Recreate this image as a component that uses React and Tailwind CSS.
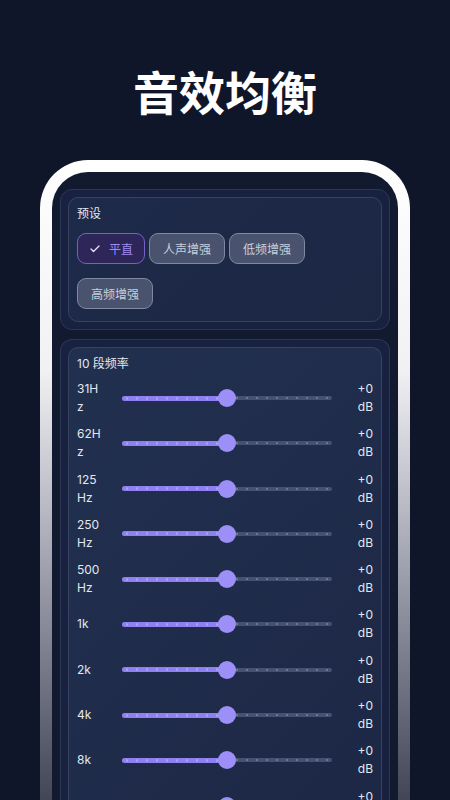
import { Check } from 'lucide-react';

const presets = [
  { name: '平直', active: true },
  { name: '人声增强' },
  { name: '低频增强' },
  { name: '高频增强' },
];

const bands = ['31Hz', '62Hz', '125 Hz', '250 Hz', '500 Hz', '1k', '2k', '4k', '8k', '16k'];

function Slider({ value = 50 }) {
  return (
    <div className="relative flex-1 h-[18px] flex items-center">
      <div className="w-full h-[4px] rounded-full bg-[#465070] bg-[radial-gradient(circle,rgba(150,160,190,0.45)_1px,transparent_1.3px)] bg-size-[10px_4px]" />
      <div
        className="absolute left-0 h-[5px] rounded-full bg-[#8f80f2] bg-[radial-gradient(circle,rgba(200,195,255,0.5)_1px,transparent_1.3px)] bg-size-[10px_5px]"
        style={{ width: value + '%' }}
      />
      <div
        className="absolute w-[18px] h-[18px] -ml-[9px] rounded-full bg-[#9d8ff8]"
        style={{ left: value + '%' }}
      />
    </div>
  );
}

export default function App() {
  return (
    <div className="w-[450px] h-[800px] overflow-hidden bg-[#0f1629] font-['Inter','Noto_Sans_CJK_SC',sans-serif]">
      <h1 className="pt-[67px] text-center text-white text-[46px] leading-[46px] font-bold font-['Noto_Sans_CJK_SC',sans-serif]">
        音效均衡
      </h1>

      <div className="mx-[40px] mt-[47px] h-[700px] rounded-t-[48px] p-[12px] pb-0 bg-[linear-gradient(180deg,#ffffff_0%,#f1f1f4_30%,#9a9caa_60%,#2a2e40_100%)]">
        <div className="h-full rounded-t-[36px] bg-[#111a2f] px-[8px] pt-[17px] flex flex-col gap-[9px]">
          {/* Presets */}
          <div className="rounded-[12px] border border-[#2c3756] bg-[#182240] p-[7px]">
            <div className="rounded-[10px] border border-[#37425f] bg-[linear-gradient(135deg,#22305094_0%,#1c2744_100%)] px-[8px] pt-[7px] pb-[12px]">
              <div className="text-[12px] leading-[16px] text-[#e2e8f0] font-['Noto_Sans_CJK_SC',sans-serif]">预设</div>
              <div className="mt-[12px] flex flex-wrap gap-x-[4px] gap-y-[14px]">
                {presets.map((p) => (
                  <div
                    key={p.name}
                    className={
                      p.active
                        ? 'h-[31px] px-[11px] flex items-center gap-[8px] rounded-[9px] border border-[#7262c8] bg-[#2e2658] text-[12px] text-[#9d8cf5] font-["Noto_Sans_CJK_SC",sans-serif]'
                        : 'h-[31px] px-[13px] flex items-center rounded-[9px] border border-[#7f88a0] bg-[#4a536e] text-[12px] text-[#c8cfdc] font-["Noto_Sans_CJK_SC",sans-serif]'
                    }
                  >
                    {p.active && <Check size={12} strokeWidth={2.5} className="text-[#e8e4ff]" />}
                    {p.name}
                  </div>
                ))}
              </div>
            </div>
          </div>

          {/* 10 band EQ */}
          <div className="flex-1 rounded-t-[12px] border border-b-0 border-[#2c3756] bg-[#182240] px-[7px] pt-[7px]">
            <div className="h-full rounded-t-[10px] border border-b-0 border-[#37425f] bg-[linear-gradient(135deg,#223050_0%,#1c2744_100%)] px-[8px] pt-[8px]">
              <div className="text-[12px] leading-[16px] text-[#e2e8f0]">10 段频率</div>
              <div className="mt-[8px] flex flex-col gap-[9.3px]">
                {bands.map((b) => (
                  <div key={b} className="h-[36px] flex items-center">
                    <div className="w-[26px] text-[12px] leading-[18px] text-[#e2e8f0] break-all">{b}</div>
                    <div className="w-[19px]" />
                    <Slider value={50} />
                    <div className="w-[41px] text-right text-[12px] leading-[18px] text-[#e2e8f0]">
                      +0
                      <br />
                      dB
                    </div>
                  </div>
                ))}
              </div>
            </div>
          </div>
        </div>
      </div>
    </div>
  );
}
